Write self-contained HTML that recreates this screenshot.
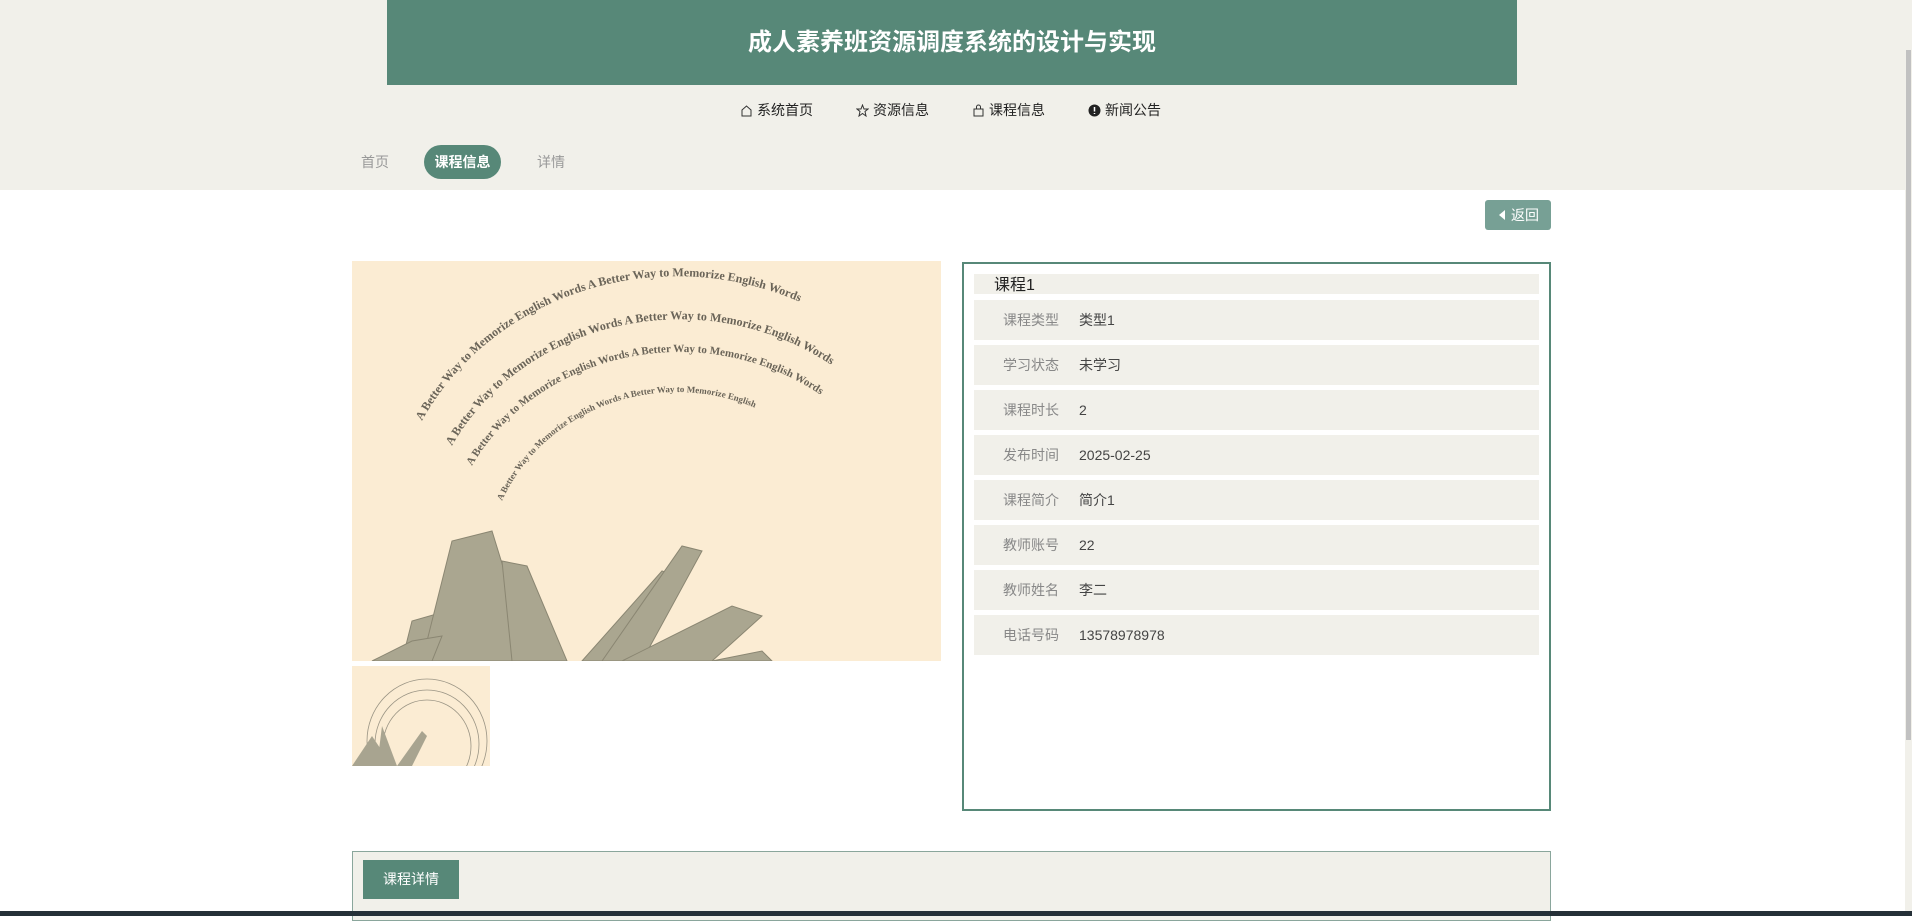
<!DOCTYPE html>
<html><head><meta charset="utf-8"><style>
*{margin:0;padding:0;box-sizing:border-box}
body{width:1912px;height:916px;overflow:hidden;background:#fff;font-family:"Liberation Sans","Noto Sans CJK SC",sans-serif;position:relative}
.band{position:absolute;left:0;top:0;width:1905px;height:190px;background:#f1f0ea}
.sb{position:absolute;left:1905px;top:0;width:7px;height:916px;background:#f1f0ea}
.sb i{position:absolute;left:1px;top:50px;width:5px;height:690px;background:#c1c1c1}
.hdr{position:absolute;left:387px;top:0;width:1130px;height:85px;background:#578878;color:#fff;font-size:24px;font-weight:bold;text-align:center;line-height:86px}
.nav{position:absolute;top:100px;height:20px;font-size:14px;color:#222;line-height:20px}
.nav svg{vertical-align:-2px;margin-right:4px}
.bc{position:absolute;top:152px;font-size:14px;color:#999;line-height:20px}
.pill{position:absolute;left:424px;top:145px;width:77px;height:34px;border-radius:17px;background:#578878;color:#fff;font-size:14px;font-weight:bold;text-align:center;line-height:34px}
.back{position:absolute;left:1485px;top:200px;width:66px;height:30px;background:#77a095;border-radius:3px;color:#fff;font-size:14px;line-height:30px;padding-left:14px}
.back:before{content:"";position:absolute;left:14px;top:10px;border-right:6px solid #fff;border-top:5px solid transparent;border-bottom:5px solid transparent}
.back span{margin-left:12px}
.img{position:absolute;left:352px;top:261px;width:589px;height:400px;background:#fbecd3;overflow:hidden}
.thumb{position:absolute;left:352px;top:666px;width:138px;height:100px;background:#fbecd3;overflow:hidden}
.box{position:absolute;left:962px;top:262px;width:589px;height:549px;border:2px solid #578878}
.t{position:absolute;left:974px;top:274px;width:565px;height:20px;background:#f1f0ea;font-size:16px;color:#222;line-height:24px;padding-left:20px}
.row{position:absolute;left:974px;width:565px;height:40px;background:#f1f0ea;font-size:14px;line-height:40px}
.row b{font-weight:normal;color:#888;position:absolute;left:29px}
.row span{color:#444;position:absolute;left:105px}
.bot{position:absolute;left:352px;top:851px;width:1199px;height:70px;border:1px solid #8aa69c;background:#f1f0ea}
.bot div{position:absolute;left:10px;top:8px;width:96px;height:39px;background:#578878;color:#fff;font-size:14px;text-align:center;line-height:39px}
.task{position:absolute;left:0;top:911px;width:1912px;height:5px;background:#253038}
</style></head><body>
<div class="band"></div>
<div class="sb"><i></i></div>
<div class="hdr">成人素养班资源调度系统的设计与实现</div>
<div class="nav" style="left:740px"><svg width="13" height="13" viewBox="0 0 13 13"><path d="M2 6L6.5 2 11 6V12H2Z" fill="none" stroke="#333"/></svg>系统首页</div>
<div class="nav" style="left:856px"><svg width="13" height="13" viewBox="0 0 13 13"><path d="M6.5 1L8 5H12L9 7.5 10 12 6.5 9.5 3 12 4 7.5 1 5H5Z" fill="none" stroke="#333"/></svg>资源信息</div>
<div class="nav" style="left:972px"><svg width="13" height="13" viewBox="0 0 13 13"><path d="M2 5H11V12H2ZM4.5 5V3A2 2 0 0 1 8.5 3V5" fill="none" stroke="#333"/></svg>课程信息</div>
<div class="nav" style="left:1088px"><svg width="13" height="13" viewBox="0 0 13 13"><circle cx="6.5" cy="6.5" r="6" fill="#222"/><path d="M6.5 3V7.5M6.5 9V10" stroke="#fff" stroke-width="1.5"/></svg>新闻公告</div>
<div class="bc" style="left:361px">首页</div>
<div class="pill">课程信息</div>
<div class="bc" style="left:537px">详情</div>
<div class="back"><span>返回</span></div>
<div class="img"><svg width="589" height="400" viewBox="0 0 589 400">
<defs><path id="a1" d="M70 160A270 250 0 0 1 580 400"/><path id="a2" d="M100 185A235 215 0 0 1 555 400"/><path id="a3" d="M120 205A210 190 0 0 1 535 400"/><path id="a4" d="M150 240A170 160 0 0 1 500 380"/></defs>
<g font-family="Liberation Serif" font-weight="bold" fill="#6a6458" font-size="12"><text><textPath href="#a1">A Better Way to Memorize English Words A Better Way to Memorize English Words</textPath></text><text><textPath href="#a2">A Better Way to Memorize English Words A Better Way to Memorize English Words</textPath></text><text font-size="11"><textPath href="#a3">A Better Way to Memorize English Words A Better Way to Memorize English Words</textPath></text><text font-size="9"><textPath href="#a4">A Better Way to Memorize English Words A Better Way to Memorize English</textPath></text></g>
<g fill="#aaa690" stroke="#8a8672" stroke-width="1"><path d="M50 400L60 360 130 340 170 400Z"/><path d="M70 400L100 280 140 270 180 400Z"/><path d="M160 400L150 300 175 305 215 400Z"/><path d="M230 400L310 310 325 315 260 400Z"/><path d="M250 400L330 285 350 290 290 400Z"/><path d="M270 400L380 345 410 355 360 400Z"/><path d="M20 400L60 380 90 375 80 400Z"/><path d="M360 400L410 390 420 400Z"/></g>
</svg></div>
<div class="thumb"><svg width="138" height="100"><g fill="none" stroke="#9a9484" stroke-width="0.8"><ellipse cx="75" cy="75" rx="60" ry="62"/><ellipse cx="75" cy="78" rx="52" ry="54"/><ellipse cx="75" cy="80" rx="44" ry="46"/></g><g fill="#a8a490"><path d="M0 100L20 70 40 100Z"/><path d="M25 100L30 60 45 100Z"/><path d="M45 100L70 65 75 70 60 100Z"/></g></svg></div>
<div class="box"></div>
<div class="t">课程1</div>
<div class="row" style="top:300px"><b>课程类型</b><span>类型1</span></div>
<div class="row" style="top:345px"><b>学习状态</b><span>未学习</span></div>
<div class="row" style="top:390px"><b>课程时长</b><span>2</span></div>
<div class="row" style="top:435px"><b>发布时间</b><span>2025-02-25</span></div>
<div class="row" style="top:480px"><b>课程简介</b><span>简介1</span></div>
<div class="row" style="top:525px"><b>教师账号</b><span>22</span></div>
<div class="row" style="top:570px"><b>教师姓名</b><span>李二</span></div>
<div class="row" style="top:615px"><b>电话号码</b><span>13578978978</span></div>
<div class="bot"><div>课程详情</div></div>
<div class="task"></div>
</body></html>
